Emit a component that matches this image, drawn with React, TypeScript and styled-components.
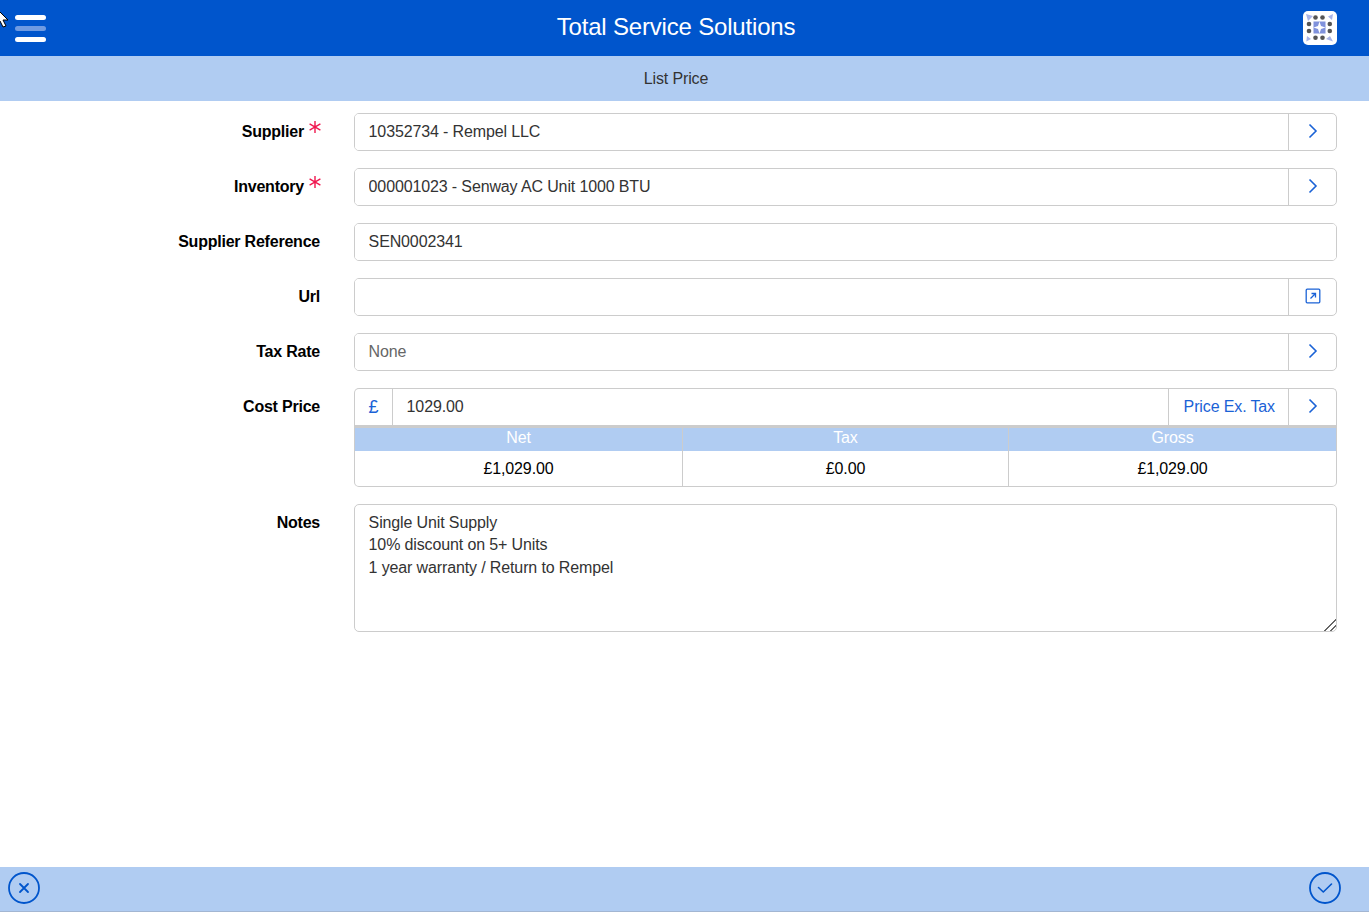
import React from 'react';
import styled, { createGlobalStyle } from 'styled-components';

const GlobalStyle = createGlobalStyle`
html, body {
    margin: 0;
    padding: 0;
    height: 100%;
    background: #fff;
    font-family: "Liberation Sans", Arial, sans-serif;
    font-size: 16px;
    letter-spacing: -0.13px;
}
#root {
    height: 100%;
}
`

const blue = '#0055cc';
const lightBlue = '#b0ccf2';
const line = '#cccccc';

export default function App() {
    return <Page>
        <GlobalStyle />
        <Cursor width="10" height="18" viewBox="0 0 10 18">
            <path d="M-2 0 L8 10 L3 10 L6 16 L3 17 L0 11 L-2 13 Z" fill="#fff" stroke="#000" strokeWidth="1" />
        </Cursor>
        <Header>
            <MenuButton aria-label="Menu">
                <MenuBar />
                <MenuBar dim />
                <MenuBar />
            </MenuButton>
            <Title>Total Service Solutions</Title>
            <Logo />
        </Header>
        <SubHeader>List Price</SubHeader>
        <Form>
            <Row>
                <Label>Supplier<Required /></Label>
                <Group>
                    <Field readOnly value="10352734 - Rempel LLC" />
                    <Addon><Chevron /></Addon>
                </Group>
            </Row>
            <Row>
                <Label>Inventory<Required /></Label>
                <Group>
                    <Field readOnly value="000001023 - Senway AC Unit 1000 BTU" />
                    <Addon><Chevron /></Addon>
                </Group>
            </Row>
            <Row>
                <Label>Supplier Reference</Label>
                <Group>
                    <Field readOnly value="SEN0002341" />
                </Group>
            </Row>
            <Row>
                <Label>Url</Label>
                <Group>
                    <Field readOnly value="" />
                    <Addon><ExternalIcon /></Addon>
                </Group>
            </Row>
            <Row>
                <Label>Tax Rate</Label>
                <Group>
                    <Field readOnly placeholder="None" />
                    <Addon><Chevron /></Addon>
                </Group>
            </Row>
            <Row>
                <Label>Cost Price</Label>
                <div>
                    <Group flatBottom>
                        <Currency>£</Currency>
                        <Field readOnly value="1029.00" />
                        <TextAddon>Price Ex. Tax</TextAddon>
                        <Addon><Chevron /></Addon>
                    </Group>
                    <Totals>
                        <thead>
                            <tr><th>Net</th><th>Tax</th><th>Gross</th></tr>
                        </thead>
                        <tbody>
                            <tr><td>£1,029.00</td><td>£0.00</td><td>£1,029.00</td></tr>
                        </tbody>
                    </Totals>
                </div>
            </Row>
            <Row>
                <Label>Notes</Label>
                <Notes readOnly value={"Single Unit Supply\n10% discount on 5+ Units\n1 year warranty / Return to Rempel"} />
            </Row>
        </Form>
        <Footer>
            <RoundButton aria-label="Cancel">
                <svg width="32" height="32" viewBox="0 0 32 32" fill="none" stroke={blue}>
                    <circle cx="16" cy="16" r="15" strokeWidth="1.8" />
                    <path d="M12 12 L20 20 M20 12 L12 20" strokeWidth="1.8" strokeLinecap="round" />
                </svg>
            </RoundButton>
            <RoundButton aria-label="Save">
                <svg width="32" height="32" viewBox="0 0 32 32" fill="none" stroke={blue}>
                    <circle cx="16" cy="16" r="15" strokeWidth="1.8" />
                    <path d="M9.5 15.5 L14.3 20 L22.5 12" strokeWidth="1.6" strokeLinecap="round" strokeLinejoin="round" />
                </svg>
            </RoundButton>
        </Footer>
    </Page>
}

const Required = () => <Star width="14" height="14" viewBox="0 0 14 14" stroke="#f0174f" strokeWidth="1.4" fill="none">
    <path d="M7 1 V13 M1.6 3.9 L12.4 10.1 M12.4 3.9 L1.6 10.1" />
</Star>;

const Chevron = () => <AddonIcon width="10" height="16" viewBox="0 0 10 16" fill="none" stroke="#1a62d6" strokeWidth="1.6">
    <path d="M1.5 1.5 L8 8 L1.5 14.5" />
</AddonIcon>;

const ExternalIcon = () => <AddonIcon width="16" height="16" viewBox="0 0 16 16" fill="none" stroke="#1a62d6">
    <rect x="1.2" y="1.2" width="13.6" height="13.6" rx="1" strokeWidth="1.3" />
    <path d="M5.5 10.5 L10.5 5.5 M6.5 5.5 H10.5 V9.5" strokeWidth="1.3" />
</AddonIcon>;

const Logo = () => <LogoBox>
    <svg width="34" height="34" viewBox="0 0 34 34">
        <path d="M3 3 L10 5 L5 10 Z M30 3 L29 9 L25 5.5 Z M3.3 30.6 L4 25 L8 28 Z M30 30.6 L23 28 L27 25 Z" fill="#a9b4e8" />
        <rect x="10.5" y="10.5" width="12" height="12" fill="#8092dc" />
        <path d="M16.5 10.5 L18 15 L22.5 16.5 L18 18 L16.5 22.5 L15 18 L10.5 16.5 L15 15 Z" fill="#fff" />
        <g fill="#555">
            <circle cx="12.5" cy="6.5" r="2.3" />
            <circle cx="19.5" cy="6.5" r="2.3" />
            <circle cx="6" cy="13" r="2.3" />
            <circle cx="26.8" cy="13" r="2.3" />
            <circle cx="6" cy="20" r="2.3" />
            <circle cx="26.8" cy="20" r="2.3" />
            <circle cx="12.5" cy="26.8" r="2.3" />
            <circle cx="19.5" cy="26.8" r="2.3" />
        </g>
    </svg>
</LogoBox>;

const Page = styled.div`
display: flex;
flex-direction: column;
height: 912px;
overflow: hidden;
position: relative;
`

const Cursor = styled.svg`
position: absolute;
left: 0;
top: 10px;
z-index: 2;
`

const Header = styled.header`
display: flex;
align-items: center;
justify-content: space-between;
height: 56px;
flex: none;
padding: 0 32px 0 15px;
background: ${blue};
position: relative;
`

const MenuButton = styled.div`
display: flex;
flex-direction: column;
gap: 6px;
width: 31px;
`

const MenuBar = styled.span<{ dim?: boolean }>`
height: 5px;
border-radius: 3px;
background: ${props => props.dim ? '#6f9be2' : '#fff'};
`

const Title = styled.div`
position: absolute;
left: 0;
right: 17px;
padding-bottom: 2px;
text-align: center;
color: #fff;
font-size: 24px;
letter-spacing: -0.18px;
pointer-events: none;
`

const LogoBox = styled.div`
width: 34px;
height: 34px;
background: #fff;
border-radius: 5px;
`

const SubHeader = styled.div`
display: flex;
align-items: center;
justify-content: center;
height: 45px;
flex: none;
padding-right: 17px;
background: ${lightBlue};
color: #333;
`

const Form = styled.main`
flex: 1;
display: flex;
flex-direction: column;
gap: 17px;
padding: 12px 32px 0 0;
`

const Row = styled.div`
display: grid;
grid-template-columns: 320px 1fr;
column-gap: 34px;
`

const Label = styled.label`
display: flex;
align-items: center;
justify-content: flex-end;
align-self: start;
height: 38px;
font-weight: bold;
letter-spacing: -0.22px;
color: #000;
`

const Star = styled.svg`
margin: -11px -2px 0 4px;
`

const Group = styled.div<{ flatBottom?: boolean }>`
display: flex;
height: 38px;
box-sizing: border-box;
border: 1px solid ${line};
border-radius: ${props => props.flatBottom ? '5px 5px 0 0' : '5px'};
${props => props.flatBottom ? 'border-bottom: 0; padding-bottom: 1px;' : ''}
overflow: hidden;
`

const Field = styled.input`
flex: 1;
min-width: 0;
border: 0;
outline: 0;
padding: 0 14px 0 13.6px;
font: inherit;
letter-spacing: inherit;
color: #333;
background: #fff;

&::placeholder {
color: #666;
opacity: 1;
}
`

const Addon = styled.div`
display: flex;
align-items: center;
justify-content: center;
flex: none;
width: 47px;
border-left: 1px solid ${line};
`

const AddonIcon = styled.svg`
margin: 0 0 2px 1px;
`

const TextAddon = styled(Addon)`
width: auto;
padding: 0 13px 0 15px;
color: #1a62d6;
`

const Currency = styled.div`
display: flex;
align-items: center;
justify-content: center;
flex: none;
width: 37px;
border-right: 1px solid ${line};
color: #1a62d6;
font-size: 18px;
`

const Totals = styled.table`
width: 100%;
table-layout: fixed;
border-collapse: separate;
border-spacing: 0;
box-sizing: border-box;
border: 1px solid ${line};
border-top: 3px solid ${line};
border-radius: 0 0 5px 5px;
margin-top: -1px;
overflow: hidden;

th {
height: 19px;
padding: 0 0 4px;
background: ${lightBlue};
color: #fff;
font-weight: normal;
text-align: center;
}

th:nth-child(1) {
width: 327px;
}

th:nth-child(2) {
width: 325px;
}

td {
height: 35px;
padding: 0;
color: #000;
text-align: center;
}

th + th, td + td {
border-left: 1px solid ${line};
}
`

const Notes = styled.textarea`
display: block;
box-sizing: border-box;
width: 100%;
height: 128px;
padding: 6.5px 14px 6.5px 13.6px;
border: 1px solid ${line};
border-radius: 5px;
outline: 0;
font: inherit;
letter-spacing: inherit;
line-height: 22.5px;
color: #333;
resize: both;

&::-webkit-resizer {
background: linear-gradient(135deg, transparent 0 60%, #666 60% 65%, transparent 65% 80%, #666 80% 85%, transparent 85%);
}
`

const Footer = styled.footer`
display: flex;
align-items: center;
justify-content: space-between;
height: 45px;
flex: none;
box-sizing: border-box;
padding: 0 28px 2px 8px;
background: ${lightBlue};
border-bottom: 1px solid #a3b6d2;
`

const RoundButton = styled.div`
display: flex;
width: 32px;
height: 32px;
`
